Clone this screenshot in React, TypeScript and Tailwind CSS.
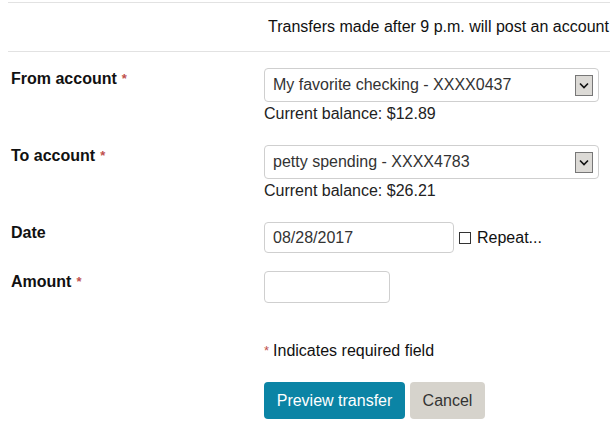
import React from "react";

const font = { fontFamily: '"Liberation Sans", Arial, sans-serif' };

function Req() {
  return <span className="ml-[5px] text-[13px] align-top text-[#c0504d]">*</span>;
}

function Label({ text, req }: { text: string; req?: boolean }) {
  return (
    <div className="pt-[2px] text-[16px] font-bold leading-[18px] text-[#111]">
      {text}
      {req && <Req />}
    </div>
  );
}

function Select({ value }: { value: string }) {
  return (
    <div className="flex h-[34px] w-[335px] items-center justify-between rounded-[4px] border border-[#cfcfcf] bg-white pl-[8px] pr-[5px]">
      <span className="text-[16px] text-[#333]">{value}</span>
      <span className="flex h-[21px] w-[18px] items-center justify-center border border-[#777] bg-[#dcdad6]">
        <svg width="10" height="7" viewBox="0 0 10 7">
          <path d="M1 1.5 L5 5.5 L9 1.5" fill="none" stroke="#111" strokeWidth="1.6" />
        </svg>
      </span>
    </div>
  );
}

function Balance({ amount }: { amount: string }) {
  return <div className="mt-[3px] text-[16px] leading-[18px] text-[#222]">Current balance: {amount}</div>;
}

export default function App() {
  return (
    <div className="h-[437px] w-[610px] overflow-hidden bg-white" style={font}>
      {/* notice bar */}
      <div className="ml-[8px] mt-[2px] h-[50px] border-y border-[#e2e2e2]">
        <div className="whitespace-nowrap pl-[260px] pt-[14px] text-[16px] leading-[20px] text-[#111]">
          Transfers made after 9 p.m. will post an account
        </div>
      </div>

      <div className="grid grid-cols-[253px_1fr] pl-[11px]">
        <div className="mt-[16px]"><Label text="From account" req /></div>
        <div className="mt-[16px]">
          <Select value="My favorite checking - XXXX0437" />
          <Balance amount="$12.89" />
        </div>

        <div className="mt-[22px]"><Label text="To account" req /></div>
        <div className="mt-[22px]">
          <Select value="petty spending - XXXX4783" />
          <Balance amount="$26.21" />
        </div>

        <div className="mt-[22px]"><Label text="Date" /></div>
        <div className="mt-[22px] flex items-center">
          <div className="flex h-[31px] w-[190px] items-center rounded-[4px] border border-[#cfcfcf] pl-[8px] text-[16px] text-[#333]">
            08/28/2017
          </div>
          <span className="ml-[5px] h-[12px] w-[12px] border border-[#333]" />
          <span className="ml-[6px] text-[16px] text-[#111]">Repeat...</span>
        </div>

        <div className="mt-[18px]"><Label text="Amount" req /></div>
        <div className="mt-[18px]">
          <div className="h-[32px] w-[126px] rounded-[4px] border border-[#cfcfcf]" />
        </div>

        <div />
        <div className="mt-[39px] text-[16px] leading-[18px] text-[#111]">
          <span className="mr-[4px] text-[13px] align-top text-[#c0504d]">*</span>Indicates required field
        </div>

        <div />
        <div className="mt-[22px] flex gap-[5px]">
          <button className="h-[37px] w-[141px] rounded-[4px] bg-[#0b84a5] text-[16px] text-white">
            Preview transfer
          </button>
          <button className="h-[37px] w-[75px] rounded-[4px] bg-[#d6d3cc] text-[16px] text-[#333]">
            Cancel
          </button>
        </div>
      </div>
    </div>
  );
}
